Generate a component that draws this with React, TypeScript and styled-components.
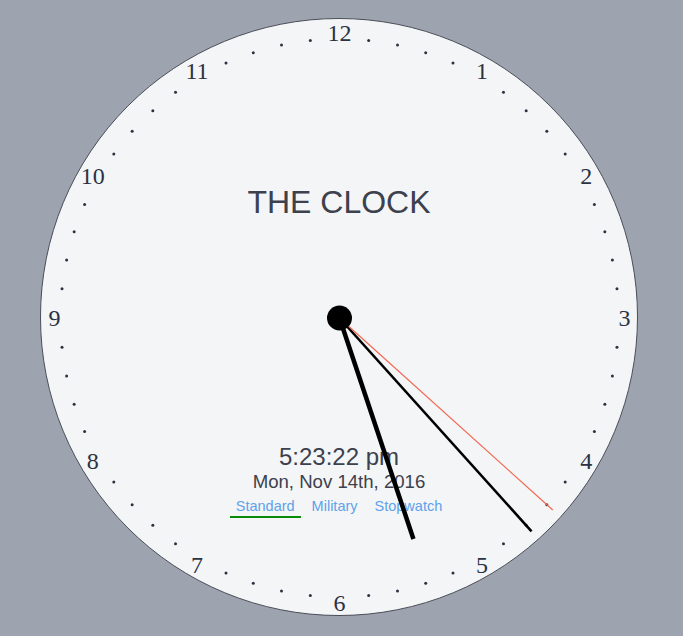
import * as React from "react";
import styled, { createGlobalStyle } from "styled-components";

const GlobalStyle = createGlobalStyle`
  html, body {
    margin: 0;
    padding: 0;
    background: #9ea3b0;
    font-family: "Liberation Sans", Arial, sans-serif;
  }
`;

const SIZE = 598;
const C = SIZE / 2 - 1; // center inside the border

const Page = styled.div`
  padding: 18px 0 0 40px;
  height: 636px;
  box-sizing: border-box;
`;

const Face = styled.div`
  position: relative;
  width: ${SIZE}px;
  height: ${SIZE}px;
  box-sizing: border-box;
  border: 1px solid #4a4e58;
  border-radius: 50%;
  background: #f4f5f7;
  display: flex;
  flex-direction: column;
  align-items: center;
`;

const Title = styled.h1`
  margin: 165px 0 0;
  font-size: 32px;
  line-height: 36px;
  font-weight: normal;
  color: #3c414d;
`;

const Time = styled.div`
  margin-top: 223px;
  font-size: 24px;
  line-height: 28px;
  color: #3c414d;
`;

const DateLine = styled.div`
  font-size: 18.6px;
  line-height: 21px;
  color: #3c414d;
`;

const Tabs = styled.div`
  display: flex;
  gap: 5px;
  margin-top: 5px;
`;

const Tab = styled.div<{ active?: boolean }>`
  padding: 0 6px 1px;
  font-size: 14.5px;
  line-height: 18px;
  color: #5ea2ea;
  border-bottom: 2px solid ${p => (p.active ? "#0a8a0a" : "transparent")};
`;

const Dial = styled.svg`
  position: absolute;
  left: 0;
  top: 0;
  pointer-events: none;
  overflow: visible;
`;

const polar = (deg: number, r: number) => {
  const a = (deg * Math.PI) / 180;
  return { x: C + 0.5 + r * Math.sin(a), y: C + 1 - r * Math.cos(a) };
};

const Hand = ({ deg, len, w, stroke }: { deg: number; len: number; w: number; stroke: string }) => {
  const e = polar(deg, len);
  const c = polar(0, 0);
  return <line x1={c.x} y1={c.y} x2={e.x} y2={e.y} stroke={stroke} strokeWidth={w} />;
};

export default function App() {
  const hours = 5;
  const minutes = 23;
  const seconds = 22;
  const ticks = Array.from({ length: 60 }, (_, i) => i).filter(i => i % 5 !== 0);
  const numbers = Array.from({ length: 12 }, (_, i) => i + 1);
  const center = polar(0, 0);

  return (
    <Page>
      <GlobalStyle />
      <Face>
        <Title>THE CLOCK</Title>
        <Time>5:23:22 pm</Time>
        <DateLine>Mon, Nov 14th, 2016</DateLine>
        <Tabs>
          <Tab active>Standard</Tab>
          <Tab>Military</Tab>
          <Tab>Stopwatch</Tab>
        </Tabs>
        <Dial width={SIZE} height={SIZE}>
          {ticks.map(i => {
            const p = polar(i * 6, 279);
            return <circle key={i} cx={p.x} cy={p.y} r={1.5} fill="#2d3241" />;
          })}
          {numbers.map(n => {
            const p = polar(n * 30, 285);
            return (
              <text
                key={n}
                x={p.x}
                y={p.y + 8}
                textAnchor="middle"
                fontFamily='"Liberation Serif", "Times New Roman", serif'
                fontSize={24}
                fill="#2b3243"
              >
                {n}
              </text>
            );
          })}
          <Hand deg={hours * 30 + minutes * 0.5} len={233} w={4.5} stroke="#000" />
          <Hand deg={minutes * 6} len={287} w={2.6} stroke="#000" />
          <Hand deg={seconds * 6} len={287} w={1.2} stroke="#f4674f" />
          <circle cx={center.x} cy={center.y} r={12.5} fill="#000" />
        </Dial>
      </Face>
    </Page>
  );
}
